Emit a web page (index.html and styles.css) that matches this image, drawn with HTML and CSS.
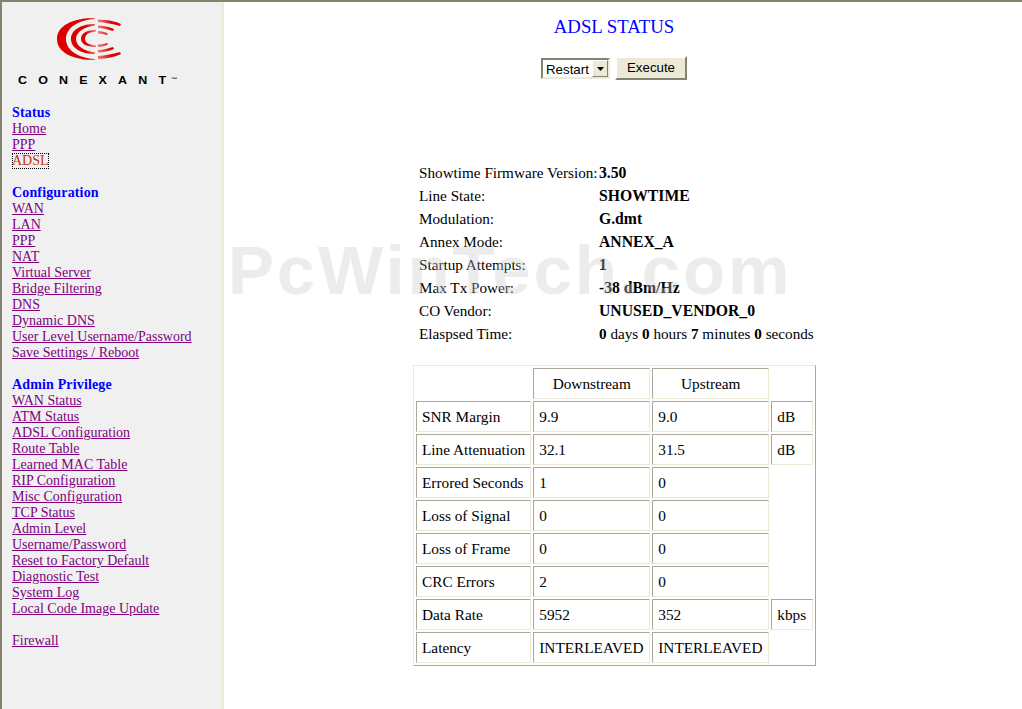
FILE: index.html
```html
<!DOCTYPE html>
<html>
<head>
<meta charset="utf-8">
<title>ADSL Status</title>
<link rel="stylesheet" href="styles.css">
</head>
<body>
<div class="page">
  <nav class="side">
    <div class="logo">
      <svg class="logo-mark" width="80" height="60" viewBox="50 10 80 60">
        <defs>
          <linearGradient id="logo-fade" gradientUnits="userSpaceOnUse" x1="57" y1="0" x2="121" y2="0">
            <stop offset="0" stop-color="#dc0000"/>
            <stop offset="0.45" stop-color="#dc0000"/>
            <stop offset="0.6" stop-color="#ee7070"/>
            <stop offset="0.66" stop-color="#ee7070"/>
            <stop offset="0.85" stop-color="#dc0000"/>
            <stop offset="1" stop-color="#dc0000"/>
          </linearGradient>
        </defs>
        <g fill="url(#logo-fade)">
          <path d="M95 18 C72 18 57 26 57 39 C57 52 72 60 95 60 L95 59 C78 58 66 50 66 39 C66 28 78 20 95 19 Z"/>
          <path d="M95 24 C81 24 71 30 71 39 C71 48 81 54 95 54 L95 52.500 C84 51 76 46 76 39 C76 32 84 27 95 25.500 Z"/>
          <path d="M96 30 C87 30 81 33 81 39 C81 44 87 47 96 47 L96 45.500 C90 45 85 43 85 39 C85 34 90 32 96 31.500 Z"/>
          <path d="M98 19.500 C107 20 115 21 121 24 L120 26 C112 24 106 22.500 98 22 Z"/>
          <path d="M98 25.500 C103 25.500 109 27 114 29 L113 31 C108 29.500 103 28 98 28 Z"/>
          <path d="M98 31 C101 31 105 32 108 33.500 L107 35 C104 34 101 33.500 98 33.500 Z"/>
          <path d="M98 44.500 C101 44.500 104 44 107 43 L108 44.500 C105 46 101 47 98 47 Z"/>
          <path d="M98 50 C103 50 108 48.500 113 47 L114 49 C109 51 103 52.500 98 52.500 Z"/>
          <path d="M98 56 C106 55.500 112 54 120 52 L121 54 C115 57 107 58.500 98 59 Z"/>
        </g>
      </svg>
      <div class="wordmark">CONEXANT<span class="tm">™</span></div>
    </div>
    <div class="group">
      <div class="group-title">Status</div>
      <a href="#">Home</a>
      <a href="#">PPP</a>
      <a href="#" class="active">ADSL</a>
    </div>
    <div class="group">
      <div class="group-title">Configuration</div>
      <a href="#">WAN</a>
      <a href="#">LAN</a>
      <a href="#">PPP</a>
      <a href="#">NAT</a>
      <a href="#">Virtual Server</a>
      <a href="#">Bridge Filtering</a>
      <a href="#">DNS</a>
      <a href="#">Dynamic DNS</a>
      <a href="#">User Level Username/Password</a>
      <a href="#">Save Settings / Reboot</a>
    </div>
    <div class="group">
      <div class="group-title">Admin Privilege</div>
      <a href="#">WAN Status</a>
      <a href="#">ATM Status</a>
      <a href="#">ADSL Configuration</a>
      <a href="#">Route Table</a>
      <a href="#">Learned MAC Table</a>
      <a href="#">RIP Configuration</a>
      <a href="#">Misc Configuration</a>
      <a href="#">TCP Status</a>
      <a href="#">Admin Level</a>
      <a href="#">Username/Password</a>
      <a href="#">Reset to Factory Default</a>
      <a href="#">Diagnostic Test</a>
      <a href="#">System Log</a>
      <a href="#">Local Code Image Update</a>
    </div>
    <div class="group">
      <a href="#">Firewall</a>
    </div>
  </nav>
  <main class="main">
    <h1 class="title">ADSL STATUS</h1>
    <form class="controls">
      <span class="select-wrap">
        <select class="select"><option>Restart</option></select>
        <span class="select-btn"><svg width="7" height="4" viewBox="0 0 7 4"><path d="M0 0h7L3.500 4z"/></svg></span>
      </span>
      <button type="button" class="exec">Execute</button>
    </form>
    <table class="info">
      <tr><td class="k">Showtime Firmware Version:</td><td class="v">3.50</td></tr>
      <tr><td class="k">Line State:</td><td class="v">SHOWTIME</td></tr>
      <tr><td class="k">Modulation:</td><td class="v">G.dmt</td></tr>
      <tr><td class="k">Annex Mode:</td><td class="v">ANNEX_A</td></tr>
      <tr><td class="k">Startup Attempts:</td><td class="v">1</td></tr>
      <tr><td class="k">Max Tx Power:</td><td class="v">-38 dBm/Hz</td></tr>
      <tr><td class="k">CO Vendor:</td><td class="v">UNUSED_VENDOR_0</td></tr>
      <tr><td class="k">Elaspsed Time:</td><td><b>0</b> days <b>0</b> hours <b>7</b> minutes <b>0</b> seconds</td></tr>
    </table>
    <table class="stats">
      <tr><td class="none"></td><td class="c head">Downstream</td><td class="c head">Upstream</td><td class="none"></td></tr>
      <tr><td class="c">SNR Margin</td><td class="c">9.9</td><td class="c">9.0</td><td class="c">dB</td></tr>
      <tr><td class="c">Line Attenuation</td><td class="c">32.1</td><td class="c">31.5</td><td class="c">dB</td></tr>
      <tr><td class="c">Errored Seconds</td><td class="c">1</td><td class="c">0</td><td class="none"></td></tr>
      <tr><td class="c">Loss of Signal</td><td class="c">0</td><td class="c">0</td><td class="none"></td></tr>
      <tr><td class="c">Loss of Frame</td><td class="c">0</td><td class="c">0</td><td class="none"></td></tr>
      <tr><td class="c">CRC Errors</td><td class="c">2</td><td class="c">0</td><td class="none"></td></tr>
      <tr><td class="c">Data Rate</td><td class="c">5952</td><td class="c">352</td><td class="c">kbps</td></tr>
      <tr><td class="c">Latency</td><td class="c">INTERLEAVED</td><td class="c">INTERLEAVED</td><td class="none"></td></tr>
    </table>
    <div class="watermark">PcWinTech.com</div>
  </main>
</div>
</body>
</html>
```

FILE: styles.css
```css
html, body {
  margin: 0;
  height: 100%;
  overflow: hidden;
  background: #fff;
  font-family: "Liberation Serif", "Times New Roman", serif;
  color: #000;
}
.page {
  display: flex;
  height: 709px;
  border-top: 2px solid #85826f;
  box-sizing: border-box;
}
.side {
  width: 224px;
  flex: none;
  box-sizing: border-box;
  background: #f0f0f0;
  border-left: 2px solid #85826f;
  border-right: 2px solid #ece9d8;
  padding: 8px 0 0 10px;
  font-size: 14px;
  line-height: 16px;
}
.logo {
  height: 95px;
}
.logo-mark {
  margin-left: 38px;
  display: block;
}
.wordmark {
  margin: 4px 0 0 6px;
  font-family: "Liberation Sans", Arial, sans-serif;
  font-weight: bold;
  font-size: 10px;
  line-height: 11px;
  letter-spacing: 8.900px;
  white-space: nowrap;
  transform: scaleX(1.25);
  transform-origin: left center;
}
.tm {
  font-size: 5px;
  letter-spacing: 0;
  margin-left: -5px;
  vertical-align: 3px;
}
.group { margin-bottom: 16px; }
.group-title {
  color: #0000ff;
  font-weight: bold;
  letter-spacing: 0.150px;
}
.group a {
  display: block;
  width: max-content;
  color: #800080;
}
.group a.active {
  color: #c8330a;
  text-decoration: none;
  outline: 1px dotted #000;
  outline-offset: -1px;
}
.main {
  flex: 1;
  position: relative;
  font-size: 14px;
  padding: 14px 18px 0 0;
}
.watermark {
  position: absolute;
  left: 4px;
  top: 234px;
  font-family: "Liberation Sans", Arial, sans-serif;
  font-weight: bold;
  font-size: 69px;
  line-height: 70px;
  letter-spacing: 2.850px;
  color: rgba(200, 200, 200, 0.35);
  white-space: nowrap;
  pointer-events: none;
}
.title {
  margin: 0;
  text-align: center;
  font-size: 18.800px;
  line-height: 21px;
  font-weight: normal;
  color: #0000ff;
}
.controls {
  display: flex;
  align-items: flex-end;
  justify-content: center;
  gap: 5px;
  margin: 19px 0 0;
}
.select-wrap {
  position: relative;
  display: block;
  width: 69px;
  height: 21px;
  box-sizing: border-box;
}
.select {
  appearance: none;
  -webkit-appearance: none;
  width: 100%;
  height: 100%;
  box-sizing: border-box;
  border: 2px solid;
  border-color: #85826f #ece9d8 #ece9d8 #85826f;
  border-radius: 0;
  background: #fff;
  padding: 1px 0 0 3px;
  font-family: "Liberation Sans", Arial, sans-serif;
  font-size: 13.300px;
  color: #000;
}
.select-btn {
  position: absolute;
  right: 2px;
  top: 2px;
  width: 16px;
  height: 17px;
  box-sizing: border-box;
  display: flex;
  align-items: center;
  justify-content: center;
  background: #ece9d8;
  border: 1px solid;
  border-color: #fff #85826f #85826f #fff;
}
.exec {
  width: 72px;
  height: 24px;
  box-sizing: border-box;
  margin: 0 0 -1px;
  padding: 0 0 1px;
  background: #ece9d8;
  border: 2px solid;
  border-color: #fff #85826f #85826f #fff;
  font-family: "Liberation Sans", Arial, sans-serif;
  font-size: 13.300px;
  color: #000;
}
.info {
  border-collapse: collapse;
  margin: 82px 0 0 195px;
  font-size: 15.200px;
  line-height: 23px;
}
.info td { padding: 0; white-space: nowrap; }
.info .k { width: 180px; }
.info .v { font-weight: bold; font-size: 15.700px; }
.stats {
  border-collapse: separate;
  border-spacing: 2px;
  border: 1px solid #aca899;
  border-top-color: #ece9d8;
  border-left-color: #ece9d8;
  margin: 20px 0 0 189px;
  font-size: 15.300px;
  line-height: 19px;
}
.stats td { padding: 5px; white-space: nowrap; box-sizing: border-box; }
.stats td:nth-child(2) { width: 117px; }
.stats td:nth-child(3) { width: 117px; }
.stats td:nth-child(4) { width: 42px; }
.stats .c {
  border: 1px solid;
  border-color: #aca899 #ece9d8 #ece9d8 #aca899;
}
.stats .none { border: 1px solid transparent; }
.stats .head { text-align: center; }
```
